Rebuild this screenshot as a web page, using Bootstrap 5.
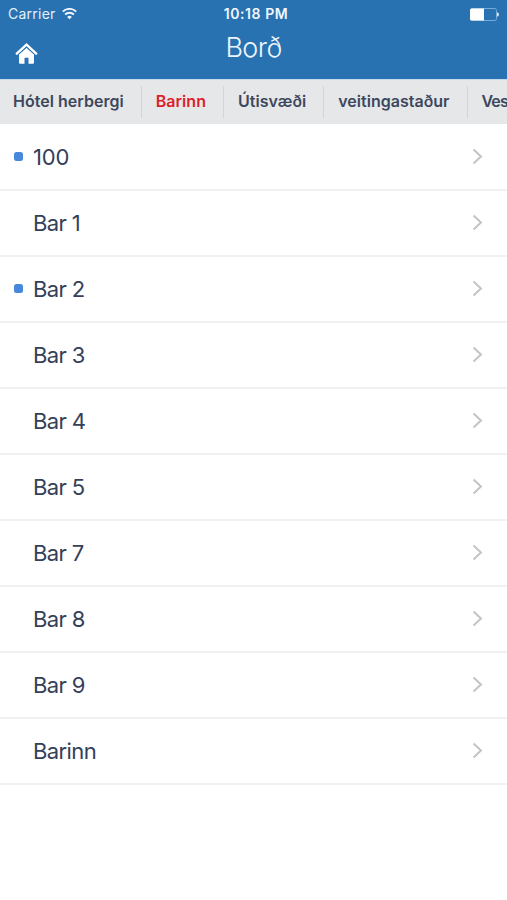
<!DOCTYPE html>
<html lang="is">
<head>
<meta charset="utf-8">
<meta name="viewport" content="width=device-width, initial-scale=1">
<title>Borð</title>
<link href="https://cdn.jsdelivr.net/npm/bootstrap@5.3.0/dist/css/bootstrap.min.css" rel="stylesheet">
<style>
body{font-family:Inter,"Liberation Sans",sans-serif;color:#344058;background:#fff;overflow:hidden}
.app-header{height:79px;background:#2872b2;color:#fff}
.status-row{height:28px;font-size:14px;line-height:28px;padding:0 8px}
.status-side{flex:1 1 0}
.carrier{letter-spacing:.25px;color:#e4f0fa}
.wifi{margin-left:6px;margin-top:-1px}
.clock{font-weight:600;font-size:14px;letter-spacing:.55px;margin-left:5px;color:#f0f7fd}
.title-row{height:51px;padding:0 15px}
.home-icon{margin-top:-2px}
.screen-title{font-size:27px;font-weight:300;line-height:40px;letter-spacing:-.6px;color:#eef6fc}
.tab-strip{height:45px;background:#e5e7e9;border-top:1px solid #c3dbed;overflow:hidden}
.tab-item{font-size:16px;font-weight:600;line-height:43px;letter-spacing:.03px;color:#3d475c;padding:0 17px 0 15px;position:relative;white-space:nowrap}
.tab-item:first-child{padding-left:13px}
.tab-item:last-child{padding-right:0;letter-spacing:-.9px}
.tab-item + .tab-item::before{content:"";position:absolute;left:0;top:6px;height:32px;width:1px;background:#d3d5d8}
.tab-item.current{color:#dc1f2b}
#tables{padding-top:1px}
#tables .table-row{height:66px;border:0;border-bottom:2px solid #f1f1f2;padding:0 24px 1px 14px;color:#344058;background:#fff}
.marker{width:9px;height:9px;border-radius:2.5px;margin-right:10px}
.busy{background:#4788dc}
.table-name{font-size:22px;line-height:61px;padding-top:2px;letter-spacing:-.6px}
.table-name.digits{letter-spacing:-.2px}
</style>
<script src="https://cdn.jsdelivr.net/npm/bootstrap@5.3.0/dist/js/bootstrap.bundle.min.js"></script>
</head>
<body>
<header class="app-header">
  <div class="status-row d-flex align-items-center">
    <div class="status-side d-flex align-items-center">
      <span class="carrier">Carrier</span>
      <svg class="wifi" width="15" height="12" viewBox="0 0 15 12" fill="none" stroke="#eef6fc" stroke-width="1.9"><path d="M.8 3.6a9.6 9.6 0 0 1 13.4 0M3.1 6.5a6.3 6.3 0 0 1 8.8 0"/><path d="M7.5 11.3 5.1 8.9a3.4 3.4 0 0 1 4.8 0Z" fill="#eef6fc" stroke="none"/></svg>
    </div>
    <span class="clock">10:18 PM</span>
    <div class="status-side d-flex justify-content-end">
      <svg width="30" height="13" viewBox="0 0 30 13"><rect x="1.5" y=".5" width="26" height="12" rx="1.8" fill="none" stroke="#76abda"/><path d="M2.5.5H15v12H2.5A1.5 1.5 0 0 1 1 11V2A1.5 1.5 0 0 1 2.5.5Z" fill="#fff"/><path d="M28 4.3q2 .4 2 2.2t-2 2.2Z" fill="#d7e9f7"/></svg>
    </div>
  </div>
  <div class="title-row d-flex">
    <a href="#" class="status-side pt-3" aria-label="Home"><svg class="d-block home-icon" width="23" height="23" viewBox="0 0 23 23"><path d="M1.8 11.7 11.5 2.6l9.7 9.1" fill="none" stroke="#fff" stroke-width="2.5" stroke-linecap="round"/><path d="M4 12.5 11.5 5.7 19 12.5v8.2q0 1.1-1.1 1.1H13.5v-6h-4v6H5.1Q4 21.8 4 20.7Z" fill="#fff"/><path d="M3.3 12.6 11.5 5l8.2 7.6" fill="none" stroke="#2872b2" stroke-width=".9"/></svg></a>
    <h1 class="screen-title m-0">Borð</h1>
    <div class="status-side"></div>
  </div>
</header>
<nav class="tab-strip d-flex">
  <a class="tab-item text-decoration-none flex-shrink-0">Hótel herbergi</a>
  <a class="tab-item text-decoration-none flex-shrink-0 current">Barinn</a>
  <a class="tab-item text-decoration-none flex-shrink-0">Útisvæði</a>
  <a class="tab-item text-decoration-none flex-shrink-0">veitingastaður</a>
  <a class="tab-item text-decoration-none flex-shrink-0">Ves</a>
</nav>
<main class="list-group list-group-flush" id="tables"></main>
<script>
const tables=[["100",1],["Bar 1",0],["Bar 2",1],["Bar 3",0],["Bar 4",0],["Bar 5",0],["Bar 7",0],["Bar 8",0],["Bar 9",0],["Barinn",0]];
document.getElementById("tables").innerHTML=tables.map(([name,busy])=>`<a class="list-group-item table-row d-flex align-items-center"><span class="marker ${busy?"busy":""}"></span><span class="table-name flex-grow-1 ${/^\d+$/.test(name)?"digits":""}">${name}</span><svg width="11" height="17" viewBox="0 0 11 17" fill="none" stroke="#c4c4c6" stroke-width="2"><path d="m1.5 1.5 7.5 7-7.5 7"/></svg></a>`).join("");
</script>
</body>
</html>
